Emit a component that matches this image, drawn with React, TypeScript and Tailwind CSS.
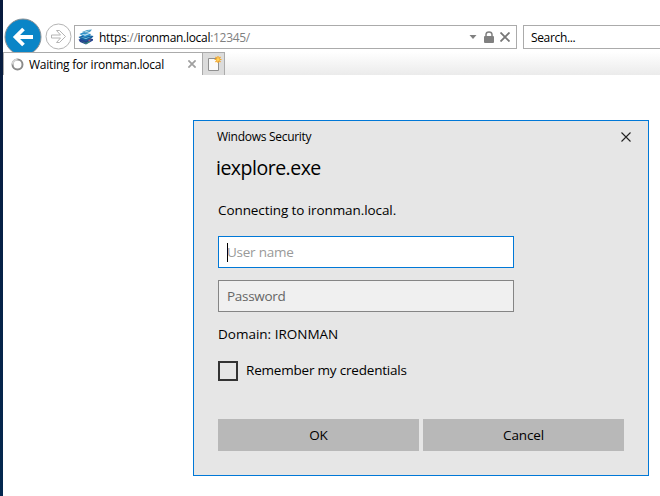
import React from "react";

function BackIcon() {
  return (
    <svg width="38" height="34" viewBox="0 0 38 34" className="shrink-0">
      <circle cx="19" cy="19" r="18" fill="#0a85c7" stroke="#8a8f94" strokeWidth="1" />
      <path d="M29 19H12M19.5 11L11.5 19L19.5 27" fill="none" stroke="#fff" strokeWidth="3.8" />
    </svg>
  );
}

function ForwardIcon() {
  return (
    <svg width="27" height="27" viewBox="0 0 27 27" className="shrink-0">
      <circle cx="13.5" cy="13.5" r="12.5" fill="#fff" stroke="#b4b4b4" />
      <path d="M6.5 12H15.5L11.5 7.5H14.5L20.5 13.5L14.5 19.5H11.5L15.5 15H6.5Z" fill="#fff" stroke="#b4b4b4" />
    </svg>
  );
}

function SiteIcon() {
  return (
    <svg width="16" height="16" viewBox="0 0 16 16" className="shrink-0">
      <path d="M0.5 10.5L8 8.5L15 10V11.5L8 15.5L2 13Z" fill="#27408f" />
      <path d="M3 12L8 14L13 11L11 13.5L8 15Z" fill="#3a9a72" />
      <path d="M10 10.5H13L11 12.5Z" fill="#b45a70" />
      <path d="M0.5 8L7 5.5L15.5 7L14 9L8 12L3 10.5Z" fill="#17619f" />
      <path d="M2 8L8 10L13.5 7.5L8 9Z" fill="#8bd5e5" />
      <path d="M1.5 5L5 3.5L13 5L12 6.5L7 8.5Z" fill="#2b8fc9" />
      <path d="M3 5L7 6.7L12.5 4.5L7 5.4Z" fill="#e4f4f8" />
      <path d="M4 3L9 1L14 0.5L12 3L7 4.5Z" fill="#4b9bc5" />
      <path d="M6 2.8L12 1.2L8 3.5Z" fill="#bde5ee" />
    </svg>
  );
}

function Cross({ size, color, weight }: { size: number; color: string; weight: number }) {
  return (
    <svg width={size} height={size} viewBox="0 0 10 10" className="shrink-0">
      <path d="M0.5 0.5L9.5 9.5M9.5 0.5L0.5 9.5" stroke={color} strokeWidth={weight} />
    </svg>
  );
}

function Toolbar() {
  return (
    <div className="flex h-[52px] items-start overflow-hidden">
      <div className="ml-px mt-[18px]"><BackIcon /></div>
      <div className="ml-[3px] mt-[23px]"><ForwardIcon /></div>
      <div className="ml-[2px] mt-[25px] flex h-6 w-[443px] shrink-0 items-center border border-[#ababab] bg-white pl-[3px] pr-[6px]">
        <SiteIcon />
        <div className="ml-[5px] flex-1 whitespace-nowrap pt-[2px] text-[12px] tracking-[-0.3px] text-[#808080]">
          <span className="text-black">https</span>://<span className="text-black">ironman.local</span>:12345/
        </div>
        <svg width="8" height="4" viewBox="0 0 8 4"><path d="M0.5 0H7.5L4 4Z" fill="#808080" /></svg>
        <svg width="10" height="12" viewBox="0 0 10 12" className="ml-[7px] mr-[6px]">
          <path d="M2 6V3.5C2 0 8 0 8 3.5V6" fill="none" stroke="#808080" strokeWidth="1.5" />
          <rect y="5" width="10" height="7" rx="1" fill="#808080" />
        </svg>
        <Cross size={10} color="#777" weight={1.8} />
      </div>
      <div className="ml-[6px] mt-[25px] flex h-6 flex-1 items-center border border-r-0 border-[#ababab] bg-white pl-[7px] pt-[2px] text-[12px] tracking-[-0.35px]">
        Search...
      </div>
    </div>
  );
}

function TabStrip() {
  return (
    <div className="flex h-[23px] bg-gradient-to-b from-white to-[#ebebeb]">
      <div className="flex w-[199px] items-center border-l border-t border-[#ababab] bg-white pl-[7px] pr-[6px]">
        <svg width="13" height="13" viewBox="0 0 13 13" className="shrink-0">
          <circle cx="6.5" cy="6.5" r="5" fill="none" stroke="#8a8a8a" strokeWidth="2" />
          <path d="M1.5 6.5A5 5 0 0 1 6.5 1.5" fill="none" stroke="#d4d4d4" strokeWidth="2" />
        </svg>
        <span className="ml-[5px] flex-1 whitespace-nowrap pt-[2px] text-[12px] tracking-[-0.23px]">Waiting for ironman.local</span>
        <Cross size={8} color="#a0a0a0" weight={2.2} />
      </div>
      <div className="flex w-[23px] justify-center border border-b-0 border-[#ababab] bg-[#dcdcdc] pt-[2px]">
        <svg width="16" height="18" viewBox="0 0 16 18">
          <path d="M2.5 3.5H12.5V15.5H2.5Z" fill="#fafafa" stroke="#909090" />
          <path d="M12 1V8M8.5 4.5H15.5M9.5 2L14.5 7M14.5 2L9.5 7" stroke="#f5a623" strokeWidth="1.2" />
          <circle cx="12" cy="4.5" r="1.5" fill="#ffd35c" />
        </svg>
      </div>
    </div>
  );
}

function Dialog() {
  return (
    <section className="ml-[190px] mt-[45px] h-[356px] w-[456px] border border-[#0078d7] bg-[#e6e6e6] px-6">
      <div className="flex h-[32px] items-center justify-between">
        <h2 className="-ml-px text-[12px] tracking-[-0.28px]">Windows Security</h2>
        <div className="mr-[-7px]"><Cross size={10} color="#222" weight={1.1} /></div>
      </div>
      <h1 className="-ml-[2px] h-[30px] text-[19.5px] leading-[29px] tracking-[-0.5px]">iexplore.exe</h1>
      <p className="mt-[17px] h-5 text-[13.5px] leading-5 tracking-[-0.09px]">Connecting to ironman.local.</p>
      <div className="mt-[16px] flex h-8 w-[296px] items-center border border-[#0078d7] bg-white pl-2">
        <span className="h-[19px] w-px bg-black" />
        <span className="-ml-px pt-px text-[13.5px] tracking-[-0.25px] text-[#999]">User name</span>
      </div>
      <div className="mt-3 flex h-8 w-[296px] items-center border border-[#858585] bg-[#f0f0f0] pl-2 pt-px text-[13.5px] tracking-[-0.3px] text-[#666]">Password</div>
      <p className="mt-3 h-5 text-[13.5px] leading-5">Domain: IRONMAN</p>
      <div className="mt-[17px] flex h-5 items-center gap-2 text-[13.5px] tracking-[-0.2px]">
        <span className="h-5 w-5 border-2 border-[#333]" />
        <span className="pb-[2px]">Remember my credentials</span>
      </div>
      <div className="mt-[38px] flex gap-1 text-[13.5px] tracking-[-0.15px]">
        <button className="h-8 w-[201px] bg-[#b8b8b8]">OK</button>
        <button className="h-8 w-[201px] bg-[#b8b8b8]">Cancel</button>
      </div>
    </section>
  );
}

export default function App() {
  return (
    <div className="flex h-[496px] w-[660px] overflow-hidden bg-white font-['Open_Sans','Noto_Sans',sans-serif] text-black">
      <div className="w-[3px] shrink-0 bg-gradient-to-b from-[#071a3d] to-[#04284f]" />
      <main className="w-[657px]">
        <Toolbar />
        <TabStrip />
        <Dialog />
      </main>
    </div>
  );
}
